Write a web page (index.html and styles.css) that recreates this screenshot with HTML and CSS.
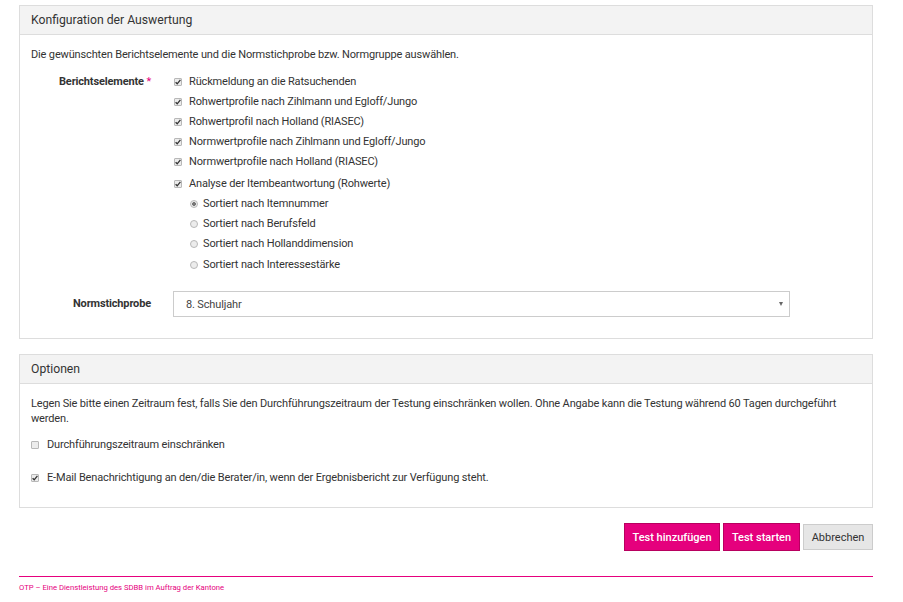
FILE: index.html
```html
<!DOCTYPE html>
<html lang="de">
<head>
<meta charset="utf-8">
<title>Konfiguration der Auswertung</title>
<link rel="stylesheet" href="styles.css">
</head>
<body>
<div class="page">
  <section class="panel">
    <div class="panel-head">Konfiguration der Auswertung</div>
    <div class="panel-body">
      <p class="intro">Die gewünschten Berichtselemente und die Normstichprobe bzw. Normgruppe auswählen.</p>
      <div class="form-row">
        <div class="form-label">Berichtselemente <span class="req">*</span></div>
        <div class="form-field">
          <label class="opt"><input type="checkbox" class="cb" checked> Rückmeldung an die Ratsuchenden</label>
          <label class="opt"><input type="checkbox" class="cb" checked> Rohwertprofile nach Zihlmann und Egloff/Jungo</label>
          <label class="opt"><input type="checkbox" class="cb" checked> Rohwertprofil nach Holland (RIASEC)</label>
          <label class="opt"><input type="checkbox" class="cb" checked> Normwertprofile nach Zihlmann und Egloff/Jungo</label>
          <label class="opt"><input type="checkbox" class="cb" checked> Normwertprofile nach Holland (RIASEC)</label>
          <label class="opt opt-gap"><input type="checkbox" class="cb" checked> Analyse der Itembeantwortung (Rohwerte)</label>
          <div class="radios">
            <label class="opt"><input type="radio" name="sort" class="rb" checked> Sortiert nach Itemnummer</label>
            <label class="opt"><input type="radio" name="sort" class="rb"> Sortiert nach Berufsfeld</label>
            <label class="opt"><input type="radio" name="sort" class="rb"> Sortiert nach Hollanddimension</label>
            <label class="opt"><input type="radio" name="sort" class="rb"> Sortiert nach Interessestärke</label>
          </div>
        </div>
      </div>
      <div class="form-row select-row">
        <div class="form-label">Normstichprobe</div>
        <div class="form-field">
          <div class="select"><span>8. Schuljahr</span><span class="caret"></span></div>
        </div>
      </div>
    </div>
  </section>

  <section class="panel panel-opts">
    <div class="panel-head">Optionen</div>
    <div class="panel-body body-opts">
      <p class="para">Legen Sie bitte einen Zeitraum fest, falls Sie den Durchführungszeitraum der Testung einschränken wollen. Ohne Angabe kann die Testung während 60 Tagen durchgeführt werden.</p>
      <label class="opt opt-plain"><input type="checkbox" class="cb"> Durchführungszeitraum einschränken</label>
      <label class="opt opt-plain opt-mail"><input type="checkbox" class="cb" checked> E-Mail Benachrichtigung an den/die Berater/in, wenn der Ergebnisbericht zur Verfügung steht.</label>
    </div>
  </section>

  <div class="actions">
    <button class="btn btn-primary btn-add">Test hinzufügen</button>
    <button class="btn btn-primary btn-start">Test starten</button>
    <button class="btn btn-default">Abbrechen</button>
  </div>

  <footer class="footer">OTP – Eine Dienstleistung des SDBB im Auftrag der Kantone</footer>
</div>
</body>
</html>
```

FILE: styles.css
```css
html, body {
  margin: 0;
  padding: 0;
  background: #fff;
}
body {
  font-family: Roboto, "Liberation Sans", Arial, sans-serif;
  font-size: 11px;
  letter-spacing: -0.15px;
  color: #333;
}
.page {
  width: 854px;
  padding: 5px 0 0 19px;
}
.panel {
  border: 1px solid #ddd;
  background: #fff;
}
.panel-opts {
  margin-top: 15px;
}
.panel-head {
  background: #f3f3f3;
  border-bottom: 1px solid #ddd;
  height: 28px;
  line-height: 28px;
  padding: 0 11px;
  font-size: 12.2px;
  letter-spacing: 0;
  color: #333;
}
.panel-body {
  padding: 12px 11px 21px 11px;
}
.intro {
  margin: 0 0 10px 0;
  line-height: 15px;
}
.form-row {
  display: flex;
  align-items: flex-start;
}
.form-label {
  width: 142px;
  flex: none;
  text-align: right;
  padding-right: 22px;
  box-sizing: border-box;
  font-weight: bold;
  line-height: 20px;
  color: #333;
}
.req {
  color: #e6007e;
  font-weight: normal;
}
.form-field {
  flex: 1;
  display: flex;
  flex-direction: column;
}
.opt {
  display: flex;
  align-items: center;
  gap: 7px;
  line-height: 20px;
  height: 20px;
  white-space: nowrap;
}
.opt-gap {
  margin-top: 2px;
}
.radios {
  padding-left: 16px;
  display: flex;
  flex-direction: column;
}
.radios .opt {
  gap: 5px;
}
.radios .opt:last-child {
  margin-top: 1px;
}
.cb, .rb {
  -webkit-appearance: none;
  appearance: none;
  margin: 0 0 0 1px;
  width: 8px;
  height: 8px;
  flex: none;
  box-sizing: border-box;
  border: 1px solid #b8b8b8;
  background: #ececec;
}
.cb {
  border-radius: 1px;
}
.cb:checked {
  background: #ececec url("data:image/svg+xml;utf8,<svg xmlns='http://www.w3.org/2000/svg' viewBox='0 0 8 8'><path d='M1.6 4.2 L3.2 5.8 L6.4 1.8' fill='none' stroke='%23333' stroke-width='1.3'/></svg>") center/8px 8px no-repeat;
}
.rb {
  border-radius: 50%;
}
.rb:checked {
  background: radial-gradient(circle, #777 0 1.6px, #ececec 2.2px);
}
.select-row {
  margin-top: 16px;
  align-items: center;
}
.select-row .form-label {
  line-height: 26px;
}
.select {
  width: 617px;
  height: 26px;
  box-sizing: border-box;
  border: 1px solid #ccc;
  display: flex;
  align-items: center;
  justify-content: space-between;
  padding: 0 6px 0 12px;
  color: #444;
}
.caret {
  width: 0;
  height: 0;
  border-left: 2.5px solid transparent;
  border-right: 2.5px solid transparent;
  border-top: 4px solid #666;
}
.body-opts {
  padding-top: 12px;
  padding-bottom: 19px;
}
.para {
  margin: 0 0 9px 0;
  line-height: 15px;
}
.opt-plain {
  gap: 8px;
}
.opt-plain .cb {
  margin-left: 0;
}
.opt-mail {
  margin-top: 13px;
}
.actions {
  display: flex;
  justify-content: flex-end;
  align-items: center;
  gap: 3px;
  margin-top: 15px;
}
.btn {
  font-family: Roboto, "Liberation Sans", Arial, sans-serif;
  font-size: 11px;
  margin: 0;
  box-sizing: border-box;
  cursor: pointer;
  white-space: nowrap;
  text-align: center;
}
.btn-primary {
  background: #e5007d;
  color: #fff;
  border: 1px solid #b8005f;
  height: 28px;
  padding: 0;
  font-weight: 500;
}
.btn-add { width: 96px; }
.btn-start { width: 77px; }
.btn-default {
  background: #e6e6e6;
  color: #333;
  border: 1px solid #ccc;
  height: 26px;
  width: 70px;
  padding: 0;
}
.footer {
  margin-top: 25px;
  border-top: 1px solid #e6007e;
  padding-top: 6px;
  font-size: 7.7px;
  letter-spacing: 0;
  color: #e6007e;
  line-height: 10px;
}
```
